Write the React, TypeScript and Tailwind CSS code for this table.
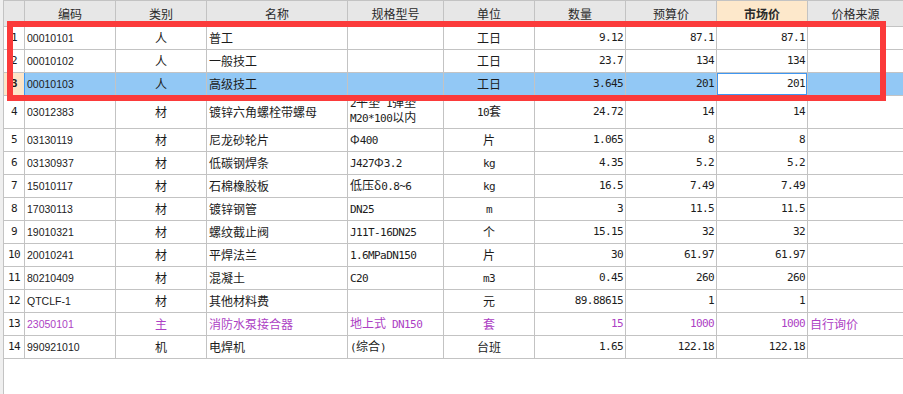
import React from "react"

type Row = {
  n: number
  code: string
  cat: string
  name: string
  spec: string
  unit: string
  qty: string
  budget: string
  market: string
  src?: string
  purple?: boolean
  tall?: boolean
}

const rows: Row[] = [
  { n: 1, code: "00010101", cat: "人", name: "普工", spec: "", unit: "工日", qty: "9.12", budget: "87.1", market: "87.1" },
  { n: 2, code: "00010102", cat: "人", name: "一般技工", spec: "", unit: "工日", qty: "23.7", budget: "134", market: "134" },
  { n: 3, code: "00010103", cat: "人", name: "高级技工", spec: "", unit: "工日", qty: "3.645", budget: "201", market: "201" },
  { n: 4, code: "03012383", cat: "材", name: "镀锌六角螺栓带螺母", spec: "M20*100以内", unit: "10套", qty: "24.72", budget: "14", market: "14", tall: true },
  { n: 5, code: "03130119", cat: "材", name: "尼龙砂轮片", spec: "Φ400", unit: "片", qty: "1.065", budget: "8", market: "8" },
  { n: 6, code: "03130937", cat: "材", name: "低碳钢焊条", spec: "J427Φ3.2", unit: "kg", qty: "4.35", budget: "5.2", market: "5.2" },
  { n: 7, code: "15010117", cat: "材", name: "石棉橡胶板", spec: "低压δ0.8~6", unit: "kg", qty: "16.5", budget: "7.49", market: "7.49" },
  { n: 8, code: "17030113", cat: "材", name: "镀锌钢管", spec: "DN25", unit: "m", qty: "3", budget: "11.5", market: "11.5" },
  { n: 9, code: "19010321", cat: "材", name: "螺纹截止阀", spec: "J11T-16DN25", unit: "个", qty: "15.15", budget: "32", market: "32" },
  { n: 10, code: "20010241", cat: "材", name: "平焊法兰", spec: "1.6MPaDN150", unit: "片", qty: "30", budget: "61.97", market: "61.97" },
  { n: 11, code: "80210409", cat: "材", name: "混凝土", spec: "C20", unit: "m3", qty: "0.45", budget: "260", market: "260" },
  { n: 12, code: "QTCLF-1", cat: "材", name: "其他材料费", spec: "", unit: "元", qty: "89.88615", budget: "1", market: "1" },
  { n: 13, code: "23050101", cat: "主", name: "消防水泵接合器", spec: "地上式 DN150", unit: "套", qty: "15", budget: "1000", market: "1000", src: "自行询价", purple: true },
  { n: 14, code: "990921010", cat: "机", name: "电焊机", spec: "(综合)", unit: "台班", qty: "1.65", budget: "122.18", market: "122.18" },
]

const grid = "grid grid-cols-[21px_91px_91px_141px_96px_91px_91px_91px_91px_1fr]"
const cell = "flex items-center overflow-hidden whitespace-nowrap border-r border-b border-[#c3c3c3]"
const mono = "font-['DejaVu_Sans_Mono',monospace] text-[11px] tracking-[-0.6px]"
const sans = "font-['Liberation_Sans',sans-serif] text-[10.5px]"

// ASCII runs go in the mono face, the rest stays CJK
function Mixed({ text }: { text: string }) {
  const parts = text.split(/([\x20-\x7e]+)/).filter(Boolean)
  return (
    <span className="whitespace-pre">
      {parts.map((p, i) =>
        /^[\x20-\x7e]+$/.test(p) ? (
          <span key={i} className={mono}>
            {p}
          </span>
        ) : (
          <span key={i}>{p}</span>
        )
      )}
    </span>
  )
}

const headers = ["", "编码", "类别", "名称", "规格型号", "单位", "数量", "预算价", "市场价", "价格来源"]

export default function App() {
  return (
    <div className="relative flex h-[394px] w-[903px] overflow-hidden bg-white font-['Noto_Sans_CJK_SC',sans-serif] text-[12px] leading-[14px] text-[#1c1c1c]">
      <div className="w-[4px] shrink-0 border-r border-[#c3c3c3] bg-[#efefef]" />
      <div className="flex min-w-0 flex-1 flex-col">
        <div className={`${grid} h-[27px] border-t border-[#c3c3c3] bg-[#e7e7e7] text-[#2a2a2a]`}>
          {headers.map((h, i) => (
            <div
              key={i}
              className={`${cell} justify-center ${i === 8 ? "bg-[#fde8cb] font-bold" : ""} ${i === 9 ? "border-r-0" : ""}`}
            >
              {h}
            </div>
          ))}
        </div>
        {rows.map((r) => {
          const sel = r.n === 3
          const color = r.purple ? "text-[#ad3fc4]" : ""
          return (
            <div
              key={r.n}
              className={`${grid} ${r.tall ? "h-[33px]" : "h-[23px]"} ${sel ? "bg-[#92c8f5]" : ""} ${color}`}
            >
              <div
                className={`${cell} justify-center text-[#1c1c1c] ${sel ? "border-r-[#3f97f2] bg-[#fde5c9] font-bold" : "bg-white"}`}
              >
                <span className={mono}>{r.n}</span>
              </div>
              <div className={`${cell} pl-[2px]`}>
                <span className={sans}>{r.code}</span>
              </div>
              <div className={`${cell} justify-center`}>{r.cat}</div>
              <div className={`${cell} pl-[2px]`}>{r.name}</div>
              {r.tall ? (
                <div className={`${cell} flex-col !items-start justify-end pb-[3px] pl-[2px] leading-[13px]`}>
                  <div>
                    <Mixed text="2平垫 1弹垫" />
                  </div>
                  <div>
                    <Mixed text={r.spec} />
                  </div>
                </div>
              ) : (
                <div className={`${cell} pl-[2px]`}>
                  <Mixed text={r.spec} />
                </div>
              )}
              <div className={`${cell} justify-center`}>
                <Mixed text={r.unit} />
              </div>
              <div className={`${cell} justify-end pr-[2px]`}>
                <span className={mono}>{r.qty}</span>
              </div>
              <div className={`${cell} justify-end pr-[2px]`}>
                <span className={mono}>{r.budget}</span>
              </div>
              <div className={`${cell} relative justify-end pr-[2px] ${sel ? "bg-white" : ""}`}>
                <span className={mono}>{r.market}</span>
                {sel && (
                  <div className="absolute -top-px right-[-1px] bottom-[-1px] left-[-1px] border-2 border-[#3f97f2]" />
                )}
              </div>
              <div className={`${cell} border-r-0 pl-[2px]`}>{r.src}</div>
            </div>
          )
        })}
      </div>
      <div className="pointer-events-none absolute top-[21px] left-[7px] h-[80px] w-[879px] border-[6px] border-[#fb3a3a]" />
    </div>
  )
}
